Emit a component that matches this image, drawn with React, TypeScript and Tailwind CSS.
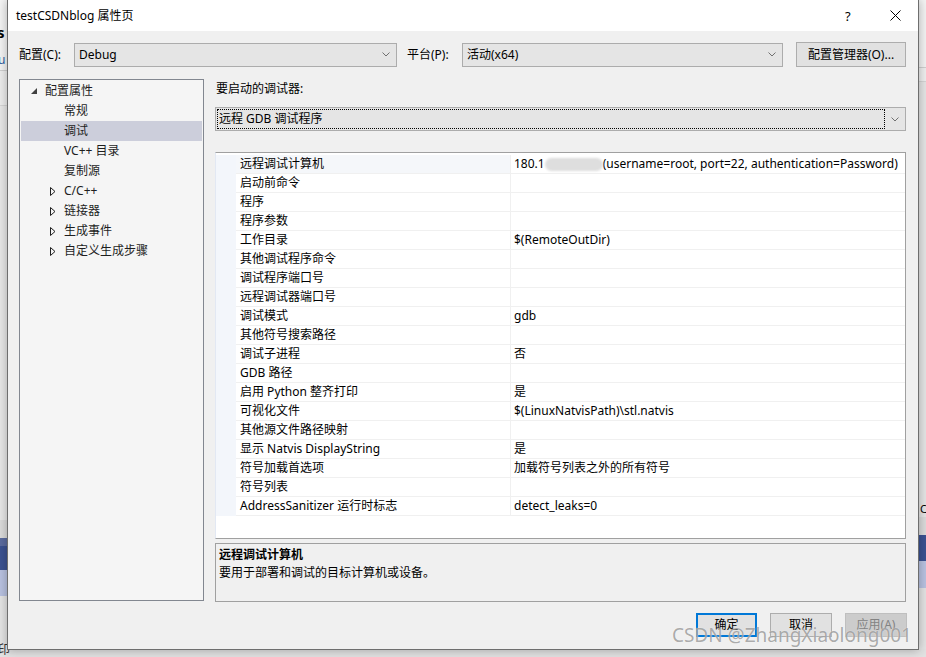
const rows: [string, string][] = [
  ["远程调试计算机", ""],
  ["启动前命令", ""],
  ["程序", ""],
  ["程序参数", ""],
  ["工作目录", "$(RemoteOutDir)"],
  ["其他调试程序命令", ""],
  ["调试程序端口号", ""],
  ["远程调试器端口号", ""],
  ["调试模式", "gdb"],
  ["其他符号搜索路径", ""],
  ["调试子进程", "否"],
  ["GDB 路径", ""],
  ["启用 Python 整齐打印", "是"],
  ["可视化文件", "$(LinuxNatvisPath)\\stl.natvis"],
  ["其他源文件路径映射", ""],
  ["显示 Natvis DisplayString", "是"],
  ["符号加载首选项", "加载符号列表之外的所有符号"],
  ["符号列表", ""],
  ["AddressSanitizer 运行时标志", "detect_leaks=0"],
];

const tree = [
  { label: "配置属性", level: 0, glyph: "open" },
  { label: "常规", level: 1, glyph: "" },
  { label: "调试", level: 1, glyph: "", selected: true },
  { label: "VC++ 目录", level: 1, glyph: "" },
  { label: "复制源", level: 1, glyph: "" },
  { label: "C/C++", level: 1, glyph: "closed" },
  { label: "链接器", level: 1, glyph: "closed" },
  { label: "生成事件", level: 1, glyph: "closed" },
  { label: "自定义生成步骤", level: 1, glyph: "closed" },
];

const Chevron = () => (
  <svg width="8" height="5" viewBox="0 0 8 5">
    <path d="M0.5 0.5 L4 4 L7.5 0.5" fill="none" stroke="#707070" strokeWidth="1" />
  </svg>
);

const Combo = ({ text, width }: { text: string; width: string }) => (
  <div className={`${width} h-[24px] flex items-center justify-between bg-[#e5e5e5] border border-[#acacac] pl-[4px] pr-[6px]`}>
    <span>{text}</span>
    <Chevron />
  </div>
);

const Backdrop = () => (
  <>
    {/* left strip */}
    <div className="absolute left-0 top-0 w-[8px] h-full flex flex-col bg-[#ececec]">
      <div className="h-[70px] bg-[#f5f5f5] relative">
        <span className="absolute left-[-3px] top-[24px] text-[15px] font-bold">s</span>
        <span className="absolute left-[-2px] top-[52px] text-[12px] text-[#2d5d9f]">u</span>
      </div>
      <div className="h-[1px] bg-[#d0d0d0]" />
      <div className="h-[34px] bg-[#eeeeee]" />
      <div className="h-[1px] bg-[#d6d6d6]" />
      <div className="h-[414px] bg-[#e9e9e9]" />
      <div className="h-[18px] bg-[#dcdcdc]" />
      <div className="h-[8px] bg-[#5b6ca0]" />
      <div className="h-[24px] bg-[#3b5292]" />
      <div className="h-[26px] bg-[#b9c3e2]" />
      <div className="flex-1 bg-[#e6e6e6]" />
    </div>
    {/* right strip */}
    <div className="absolute right-0 top-0 w-[8px] h-full flex flex-col bg-[#e4e4e4]">
      <div className="h-[67px] bg-[#f4f4f4]" />
      <div className="h-[1px] bg-[#d0d0d0]" />
      <div className="h-[13px] bg-[#f0f0f0]" />
      <div className="h-[1px] bg-[#d6d6d6]" />
      <div className="h-[435px] bg-[#e6e6e6] relative">
        <span className="absolute left-[2px] bottom-[2px] text-[11px] leading-[12px]">CR</span>
      </div>
      <div className="h-[18px] bg-[#dcdcdc]" />
      <div className="h-[26px] bg-[#3b5292]" />
      <div className="h-[27px] bg-[#b9c3e2]" />
      <div className="flex-1 bg-[#e4e4e4]" />
    </div>
    {/* bottom strip */}
    <div className="absolute left-0 bottom-0 w-full h-[8px] bg-[#e2e2e2]">
      <span className="absolute left-[-2px] top-[-7px] text-[12px] text-[#333]">印</span>
    </div>
  </>
);

export default function App() {
  return (
    <div className="relative w-[926px] h-[657px] overflow-hidden bg-[#e6e6e6] font-['Noto_Sans','Noto_Sans_CJK_SC',sans-serif] text-[12px] leading-[16px] text-black">
      <Backdrop />

      {/* dialog window */}
      <div className="absolute left-[7px] top-0 w-[912px] h-[650px] flex flex-col border border-t-0 border-[#6e6e6e] bg-[#f0f0f0] shadow-[0_0_10px_rgba(0,0,0,0.3)]">
        {/* title bar */}
        <div className="h-[31px] bg-white flex items-center pl-[8px] pr-[17px] shrink-0">
          <span className="flex-1">testCSDNblog 属性页</span>
          <span className="w-[10px] text-[13px] mr-[35px]">?</span>
          <svg width="11" height="11" viewBox="0 0 11 11">
            <path d="M0.5 0.5 L10.5 10.5 M10.5 0.5 L0.5 10.5" stroke="#000" strokeWidth="1" />
          </svg>
        </div>

        <div className="flex-1 flex flex-col pt-[11px] pl-[11px]">
          {/* configuration row */}
          <div className="flex items-center h-[25px]">
            <span className="w-[55px]">配置(C):</span>
            <Combo text="Debug" width="w-[323px]" />
            <span className="w-[55px] ml-[10px]">平台(P):</span>
            <Combo text="活动(x64)" width="w-[321px]" />
            <div className="ml-[13px] w-[110px] h-[25px] flex items-center justify-center bg-[#e1e1e1] border border-[#adadad]">
              配置管理器(O)...
            </div>
          </div>

          <div className="flex mt-[12px]">
            {/* tree */}
            <div className="w-[185px] h-[522px] border border-[#828790] bg-[#f5f5f5] p-[1px] shrink-0">
              {tree.map((n) => (
                <div
                  key={n.label}
                  className={`h-[20px] flex items-center ${n.selected ? "bg-[#cccedb]" : ""}`}
                >
                  <span className={`${n.level === 0 ? "w-[24px]" : "w-[43px]"} flex justify-end pr-[8px]`}>
                    {n.glyph === "open" && (
                      <svg width="6" height="6" viewBox="0 0 6 6">
                        <path d="M6 0 L6 6 L0 6 Z" fill="#404040" />
                      </svg>
                    )}
                    {n.glyph === "closed" && (
                      <svg width="6" height="9" viewBox="0 0 6 9">
                        <path d="M0.5 0.5 L5 4.5 L0.5 8.5 Z" fill="none" stroke="#1e1e1e" strokeWidth="1" />
                      </svg>
                    )}
                  </span>
                  <span className="text-[#1e1e1e]">{n.label}</span>
                </div>
              ))}
            </div>

            {/* right side */}
            <div className="w-[691px] ml-[11px] flex flex-col">
              <div className="h-[20px] flex items-center pl-[1px]">要启动的调试器:</div>
              <div className="mt-[8px] h-[24px] flex items-center bg-[#e5e5e5] border border-[#acacac] p-[1px]">
                <div className="flex-1 h-full flex items-center border border-dotted border-black pl-[1px]">
                  远程 GDB 调试程序
                </div>
                <div className="w-[19px] flex justify-center">
                  <Chevron />
                </div>
              </div>

              {/* property grid */}
              <div className="mt-[21px] h-[387px] border border-[#a0a0a0] border-l-[#e2e8f3] bg-white pt-[2px] shrink-0">
                {rows.map(([k, v], i) => (
                  <div key={k} className="flex h-[19px]">
                    <div className="w-[20px] bg-[#f3f6fb] shrink-0" />
                    <div className={`w-[274px] shrink-0 flex items-center pl-[4px] border-b border-[#f0f0f0] ${i === 0 ? "bg-[#f5f7fa]" : ""}`}>
                      {k}
                    </div>
                    <div className="flex-1 flex items-center pl-[3px] border-l border-b border-[#f0f0f0] whitespace-nowrap overflow-hidden">
                      {i === 0 ? (
                        <>
                          <span>180.1</span>
                          <span className="inline-block w-[58px] h-[13px] bg-[#dedede] rounded-full blur-[1px]" />
                          <span>(username=root, port=22, authentication=Password)</span>
                        </>
                      ) : (
                        v
                      )}
                    </div>
                  </div>
                ))}
              </div>

              {/* description */}
              <div className="mt-[4px] h-[59px] border border-[#a0a0a0] pl-[3px] pt-[2px] leading-[18px]">
                <div className="font-bold">远程调试计算机</div>
                <div>要用于部署和调试的目标计算机或设备。</div>
              </div>
            </div>
          </div>

          {/* buttons */}
          <div className="flex justify-end gap-[13px] mt-[11px] pr-[11px]">
            <div className="w-[61px] h-[24px] flex items-center justify-center bg-[#e1e1e1] border-2 border-[#0078d7]">确定</div>
            <div className="w-[62px] h-[24px] flex items-center justify-center bg-[#e1e1e1] border border-[#adadad]">取消</div>
            <div className="w-[62px] h-[24px] flex items-center justify-center bg-[#cccccc] border border-[#bfbfbf] text-[#838383]">应用(A)</div>
          </div>
        </div>
      </div>

      {/* watermark */}
      <div className="absolute right-[14px] top-[622px] text-[19px] leading-[26px] text-[rgba(100,100,100,0.55)] [text-shadow:0_0_1px_rgba(255,255,255,0.9)]">
        CSDN @ZhangXiaolong001
      </div>
    </div>
  );
}
